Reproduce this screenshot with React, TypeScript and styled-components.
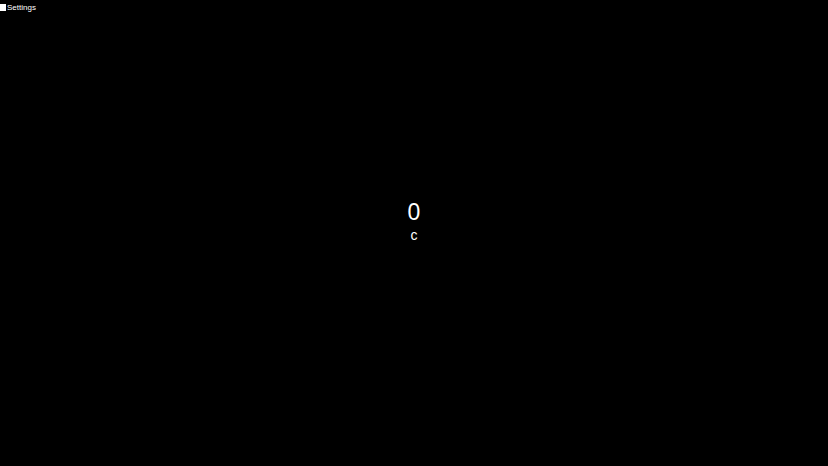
import { createGlobalStyle, styled } from "styled-components";

const GlobalStyle = createGlobalStyle`
  html, body, #root {
    margin: 0;
    height: 100%;
    background: #000;
  }
  body {
    font-family: "Liberation Sans", Arial, sans-serif;
    color: #fff;
  }
`;

const Page = styled.div`
  position: relative;
  box-sizing: border-box;
  height: 100%;
  padding-bottom: 24px;
  display: flex;
  align-items: center;
  justify-content: center;
`;

const SettingsToggle = styled.button`
  position: absolute;
  top: 3px;
  left: 0;
  display: flex;
  align-items: center;
  gap: 1px;
  padding: 0;
  border: 0;
  background: none;
  color: #fff;
  font: 8px "Liberation Sans", Arial, sans-serif;
  cursor: pointer;
`;

const Square = styled.span`
  width: 6px;
  height: 7px;
  background: #fff;
`;

const Counter = styled.div`
  display: flex;
  flex-direction: column;
  align-items: center;
  gap: 4px;
`;

const Value = styled.div`
  font-size: 23px;
  line-height: 1;
`;

const Key = styled.div`
  font-size: 14px;
  line-height: 1;
`;

export default function App() {
  return (
    <>
      <GlobalStyle />
      <Page>
        <SettingsToggle>
          <Square />
          Settings
        </SettingsToggle>
        <Counter>
          <Value>0</Value>
          <Key>c</Key>
        </Counter>
      </Page>
    </>
  );
}
